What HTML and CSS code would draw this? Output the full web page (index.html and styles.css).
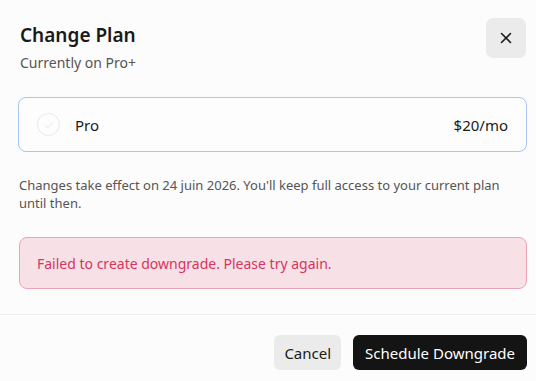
FILE: index.html
```html
<!DOCTYPE html>
<html lang="en">
<head>
    <meta charset="UTF-8">
    <meta name="viewport" content="width=device-width, initial-scale=1.0">
    <title>Change Plan</title>
    <link rel="stylesheet" href="styles.css">
</head>
<body>
    <div class="dialog">
        <div class="dialogHeader">
            <div>
                <h2 class="dialogTitle">Change Plan</h2>
                <p class="dialogSubtitle">Currently on Pro+</p>
            </div>
            <button class="closeButton" aria-label="Close">
                <svg width="14" height="14" viewBox="0 0 14 14" fill="none" stroke="#1a1a1a" stroke-width="1.6" stroke-linecap="round">
                    <path d="M2.5 2.5L11.5 11.5M11.5 2.5L2.5 11.5"/>
                </svg>
            </button>
        </div>

        <div class="dialogBody">
            <label class="planOption">
                <span class="radio">
                    <svg width="12" height="12" viewBox="0 0 12 12" fill="none" stroke="#f0f0f0" stroke-width="1.4">
                        <path d="M2.5 6.2L5 8.5L9.5 3.5"/>
                    </svg>
                </span>
                <span class="planName">Pro</span>
                <span class="planPrice">$20/mo</span>
            </label>

            <p class="notice">Changes take effect on 24 juin 2026. You'll keep full access to your current plan until then.</p>

            <div class="errorBox">Failed to create downgrade. Please try again.</div>
        </div>

        <div class="dialogFooter">
            <button class="button cancelButton">Cancel</button>
            <button class="button confirmButton">Schedule Downgrade</button>
        </div>
    </div>
</body>
</html>
```

FILE: styles.css
```css
body {
    margin: 0;
    padding: 0;
    background-color: #fcfcfc;
    font-family: "Segoe UI", "Noto Sans", sans-serif;
    color: #1a1a1a;
}
.dialog {
    width: 536px;
    height: 381px;
    display: flex;
    flex-direction: column;
}
.dialogHeader {
    display: flex;
    justify-content: space-between;
    align-items: flex-start;
    padding: 18px 10px 0 20px;
}
.dialogTitle {
    margin: 0;
    font-size: 19px;
    font-weight: 600;
    line-height: 30px;
    margin-top: 2px;
}
.dialogSubtitle {
    margin: 3px 0 0 0;
    font-size: 14px;
    color: #555;
    line-height: 20px;
}
.closeButton {
    width: 40px;
    height: 40px;
    border: none;
    border-radius: 7px;
    background-color: #ebebeb;
    display: flex;
    align-items: center;
    justify-content: center;
    cursor: pointer;
    padding: 0;
}
.dialogBody {
    padding: 24px 9px 0 19px;
}
.planOption {
    display: flex;
    align-items: center;
    height: 53px;
    padding: 0 18px 0 18px;
    border: 1.5px solid #a9c5f3;
    border-radius: 8px;
    background-color: #fdfdfd;
    margin-left: -1px;
    cursor: pointer;
}
.radio {
    width: 21px;
    height: 21px;
    border: 1px solid #e8e8e8;
    border-radius: 50%;
    display: flex;
    align-items: center;
    justify-content: center;
    background-color: #fdfdfd;
}
.planName {
    margin-left: 15px;
    font-size: 15px;
    flex: 1;
}
.planPrice {
    font-size: 15px;
}
.notice {
    margin: 24px 0 0 0;
    font-size: 13px;
    line-height: 18px;
    color: #555;
}
.errorBox {
    margin-top: 25px;
    padding: 0 17px;
    height: 50px;
    display: flex;
    align-items: center;
    background-color: #f8e1e6;
    border: 1px solid #eea3b5;
    border-radius: 8px;
    color: #d7345f;
    font-size: 14px;
}
.dialogFooter {
    margin-top: 25px;
    border-top: 1px solid #ededed;
    display: flex;
    justify-content: flex-end;
    gap: 12px;
    padding: 20px 9px 0 20px;
}
.button {
    height: 35px;
    padding: 0 10px;
    border: none;
    border-radius: 6px;
    font-family: inherit;
    font-size: 15px;
    cursor: pointer;
}
.cancelButton {
    background-color: #ebebeb;
    color: #1a1a1a;
}
.confirmButton {
    padding: 0 12px;
    background-color: #141414;
    color: #fff;
}
```
